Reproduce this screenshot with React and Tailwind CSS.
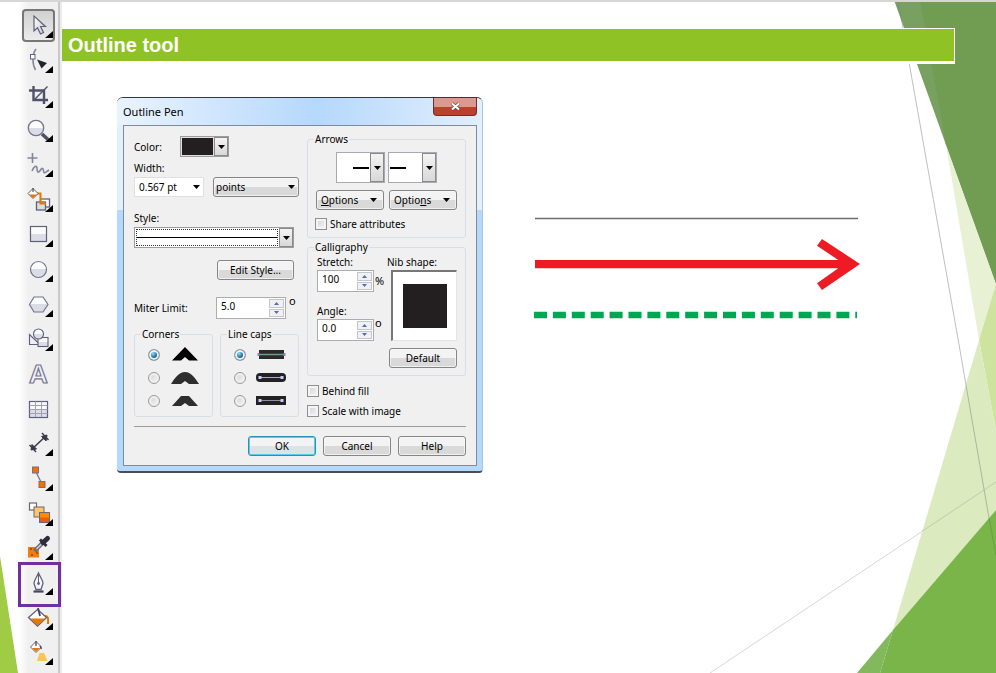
import React from "react";

const INK = "#5f6079";

function Flyout() {
  return <polygon points="31,22 31,29 23,29" fill="#000" />;
}

const tools = [
  {
    name: "Pick",
    art: (
      <path d="M12 7V22L15.500 18.800L18.500 25L21.500 23.500L18.600 17.500H23.500Z" fill="url(#metal)" stroke={INK} strokeWidth="1.200" />
    ),
  },
  {
    name: "Shape",
    art: (
      <g>
        <path d="M14 5C10 10 10 20 13.500 26" fill="none" stroke="#8586a0" strokeWidth="1.600" />
        <rect x="8.500" y="10.500" width="4.500" height="4.500" fill="#fff" stroke={INK} />
        <polygon points="15,15.500 25,19 19.500,24.500" fill="#24242f" />
      </g>
    ),
  },
  {
    name: "Crop",
    art: (
      <g fill="none" stroke="#50516a">
        <path d="M7 11.500H22V25M11.500 7V21H26" strokeWidth="2.400" />
        <path d="M13 20L25.500 7.500" strokeWidth="1.500" />
      </g>
    ),
  },
  {
    name: "Zoom",
    art: (
      <g>
        <path d="M20 21L26 26.500" stroke="#4e4f62" strokeWidth="3.500" />
        <circle cx="14" cy="15" r="7.700" fill="url(#half)" stroke="#74758c" strokeWidth="1.300" />
      </g>
    ),
  },
  {
    name: "Freehand",
    art: (
      <g fill="none" stroke="#84859c">
        <path d="M10.500 5V15M5.500 10H15.500" strokeWidth="1.600" />
        <path d="M10 23C12 18 14.500 17 15 20C15 24 16 26 18.500 22C20 19.500 21.500 20 21.500 23C22 26.500 24 24 27 22" strokeWidth="1.600" />
      </g>
    ),
  },
  {
    name: "Smart fill",
    art: (
      <g>
        <rect x="18.500" y="16" width="9" height="8" fill="#fff" stroke={INK} strokeWidth="1.300" />
        <rect x="14.500" y="19" width="9" height="8" fill="#ddd" stroke={INK} strokeWidth="1.300" />
        <path d="M14 10.500H18.500V20.500H24" fill="none" stroke="#e67800" strokeWidth="2" />
        <polygon points="11,5.500 16,10.500 11,15.500 6,10.500" fill="#fff" stroke={INK} />
        <polygon points="7,11.500 15,11.500 11,15" fill="#e67800" />
        <path d="M11 9V5" stroke="#33333f" />
      </g>
    ),
  },
  { name: "Rectangle", art: <rect x="8.500" y="8.500" width="16" height="15" fill="url(#half)" stroke={INK} strokeWidth="1.200" /> },
  { name: "Ellipse", art: <circle cx="16.500" cy="16.500" r="8" fill="url(#half)" stroke="#74758c" strokeWidth="1.200" /> },
  { name: "Polygon", art: <polygon points="12,9 21,9 26,16.500 21,24 12,24 7.500,16.500" fill="url(#half)" stroke="#74758c" strokeWidth="1.200" /> },
  {
    name: "Basic shapes",
    art: (
      <g stroke={INK} strokeWidth="1.100">
        <polygon points="7.500,12.500 7.500,22.500 18,22.500" fill="#eeeef3" />
        <rect x="16" y="15.500" width="10" height="9" fill="url(#half)" />
        <circle cx="16.500" cy="12" r="5" fill="url(#half)" />
      </g>
    ),
  },
  {
    name: "Text",
    plain: true,
    art: (
      <text x="16.500" y="25.500" textAnchor="middle" fontSize="26" fontFamily="Liberation Sans, sans-serif" fontWeight="700" fill="#f2f2f7" stroke="#74758c" strokeWidth="1.200">
        A
      </text>
    ),
  },
  {
    name: "Table",
    plain: true,
    art: (
      <g>
        <rect x="7.500" y="9.500" width="18" height="16" fill="url(#half)" stroke={INK} strokeWidth="1.200" />
        <path d="M13.500 9.500V25M19.500 9.500V25M7.500 13.500H25.500M7.500 17.500H25.500M7.500 21.500H25.500" stroke="#a0a1b4" />
      </g>
    ),
  },
  {
    name: "Dimension",
    art: (
      <g stroke="#3a3a4b" fill="#3a3a4b">
        <path d="M10 22L24 9" strokeWidth="1.600" />
        <path d="M7.500 18L14 25M20 6L26.500 13" strokeWidth="1.400" />
        <polygon points="9,23 10,17.500 14.500,22" />
        <polygon points="25,8 19.500,9.500 24,14" />
      </g>
    ),
  },
  {
    name: "Connector",
    art: (
      <g stroke="#70708a">
        <path d="M13 8L20 22" strokeWidth="1.300" />
        <rect x="10.500" y="5" width="6" height="6" fill="#f07000" />
        <rect x="17" y="19.500" width="6" height="6" fill="#f07000" />
      </g>
    ),
  },
  {
    name: "Blend",
    art: (
      <g stroke="#6f6672">
        <rect x="7.500" y="6" width="7" height="7" fill="#fff" strokeWidth="1.200" />
        <rect x="12" y="10" width="10" height="10" fill="#fdc469" />
        <rect x="17.500" y="15.500" width="10" height="10" fill="url(#flame)" />
      </g>
    ),
  },
  {
    name: "Color eyedropper",
    art: (
      <g>
        <rect x="6" y="16" width="11" height="10.500" fill="#ef7d0a" />
        <path d="M8 18H10M14 22H16M9 24H11" stroke="#9d3f00" strokeWidth="1.500" />
        <path d="M12.500 20L21 11.500" stroke="#696a7e" strokeWidth="4" />
        <path d="M14.500 18L20 12.500" stroke="#d2d2dd" strokeWidth="1.500" />
        <path d="M18 8.500L24.500 15" stroke="#2d2d3c" strokeWidth="3" />
        <path d="M21 11.500L25.500 7.500" stroke="#2d2d3c" strokeWidth="5" strokeLinecap="round" />
      </g>
    ),
  },
  {
    name: "Outline pen",
    marked: true,
    art: (
      <g>
        <path d="M16.500 7C15 11 12 14 12 17.500L14 23.500H19L21 17.500C21 14 18 11 16.500 7Z" fill="#f4f4f8" stroke={INK} strokeWidth="1.300" />
        <path d="M16.500 8V17" stroke={INK} />
        <circle cx="16.500" cy="17.500" r="1.400" fill={INK} />
        <path d="M11.500 25.500H21.500" stroke="#45465c" strokeWidth="2.200" />
      </g>
    ),
  },
  {
    name: "Fill",
    art: (
      <g>
        <path d="M23 15C27 15 26 19 26 23" fill="none" stroke="#e67800" strokeWidth="2" />
        <polygon points="15.500,8.500 24.500,16.500 15.500,25 6.500,16.500" fill="#fff" stroke={INK} strokeWidth="1.300" />
        <polygon points="8,17.500 23.500,17.500 15.500,24.500" fill="#e67800" />
        <path d="M16 7L18 15" stroke="#45465c" strokeWidth="1.800" />
      </g>
    ),
  },
  {
    name: "Interactive fill",
    art: (
      <g>
        <polygon points="17.500,17 22,17 25.500,25 15,25" fill="#f9c455" />
        <polygon points="14,5.500 19.500,11 14,16.500 8.500,11" fill="#fff" stroke={INK} />
        <polygon points="10,12 18,12 14,15.500" fill="#e67800" />
        <path d="M14 5V10M18 10L19.500 13" stroke="#45465c" strokeWidth="1.300" />
      </g>
    ),
  },
];

function Toolbox() {
  return (
    <nav aria-label="Toolbox" className="flex w-[62px] shrink-0 bg-linear-to-r from-white from-[30%] to-[#f0f0f0] to-[46%]">
      <svg className="absolute size-0" aria-hidden="true">
        <defs>
          <linearGradient id="half" x2="0" y2="1">
            <stop offset="0.500" stopColor="#fbfbfd" />
            <stop offset="0.500" stopColor="#dcdce6" />
          </linearGradient>
          <linearGradient id="metal" x2="1" y2="1">
            <stop offset="0" stopColor="#fff" />
            <stop offset="1" stopColor="#c5c5d2" />
          </linearGradient>
          <linearGradient id="flame" x2="0" y2="1">
            <stop offset="0.400" stopColor="#ff8c00" />
            <stop offset="0.600" stopColor="#f2570a" />
          </linearGradient>
        </defs>
      </svg>
      <div className="flex flex-1 flex-col justify-between pt-[7px] pb-1 pl-[22px]">
        {tools.map((tool, index) => (
          <button
            key={tool.name}
            type="button"
            aria-label={tool.name}
            className={
              index === 0
                ? "relative size-[33px] rounded-sm bg-linear-to-b from-[#cfcfcf] to-[#ededed] inset-ring-2 inset-ring-[#777]"
                : "relative size-[33px]"
            }
          >
            <svg viewBox="0 0 33 33" className="size-[33px]" aria-hidden="true">
              {tool.art}
              {!tool.plain && <Flyout />}
            </svg>
            {tool.marked && <span className="absolute -top-1 -bottom-2 -left-1 w-[43px] border-[3px] border-[#7030a0]" />}
          </button>
        ))}
      </div>
      <div className="w-1 border-l-2 border-[#c9c9c9] bg-[#ececec]" />
    </nav>
  );
}

function Backdrop() {
  return (
    <div aria-hidden="true" className="pointer-events-none absolute inset-0 -z-10">
      <svg viewBox="0 0 296 673" preserveAspectRatio="none" className="absolute top-0 right-0 h-full w-[296px]">
        <polygon points="194,0 296,0 296,284" fill="#78a061" />
        <polygon points="220,0 296,0 296,284 246,145" fill="#719d52" />
        <polygon points="246,145 296,284 279,340" fill="#e8f1d3" />
        <polygon points="296,284 279,340 296,431" fill="#cee39e" />
        <polygon points="279,340 296,431 296,510 193,630" fill="#dcebbf" />
        <polygon points="296,510 193,630 180,673 296,673" fill="#7ab54a" />
        <polygon points="193,630 157,673 180,673" fill="#82b95c" />
        <path d="M198 0L257 333L289 518" stroke="#808080" strokeOpacity="0.500" fill="none" />
        <path d="M289 518L296 555" stroke="#5f9a35" strokeOpacity="0.700" />
        <path d="M10 673L296 482" stroke="#999" strokeOpacity="0.400" />
      </svg>
    </div>
  );
}

function Arrow({ className = "" }) {
  return (
    <svg viewBox="0 0 7 4" className={"h-1 w-[7px] shrink-0 " + className} aria-hidden="true">
      <polygon points="0,0 7,0 3.500,4" fill="#000" />
    </svg>
  );
}

function DropEnd() {
  return (
    <span className="flex w-[14px] shrink-0 items-center justify-center border border-[#8a8a8a] bg-linear-to-b from-[#f4f4f4] to-[#d8d8d8]">
      <Arrow />
    </span>
  );
}

const raised = "rounded-[3px] border border-[#858585] bg-linear-to-b from-[#f3f3f3] from-50% to-[#d9d9d9] to-50% inset-ring inset-ring-[#fafafa]/70";

function PushButton({ primary, children }) {
  return (
    <button
      type="button"
      className={
        primary
          ? "h-5 w-[68px] rounded-[3px] border border-[#2c8fb8] bg-linear-to-b from-[#f3f3f3] from-50% to-[#dbe3e6] to-50% inset-ring inset-ring-[#58cdf0]"
          : "h-5 w-[68px] " + raised
      }
    >
      {children}
    </button>
  );
}

function Spinner({ id, value, wide }) {
  return (
    <span className={"flex h-[22px] border border-[#abadb3] bg-white " + (wide ? "w-[70px]" : "w-[57px]")}>
      <input id={id} defaultValue={value} className="h-4 min-w-0 flex-1 bg-transparent pl-1 outline-none" />
      <span className="flex w-[17px] flex-col gap-px p-px">
        <button type="button" aria-label="Increase" className="flex flex-1 items-center justify-center border border-[#c4c6ce] bg-[#f1f1f4]">
          <svg viewBox="0 0 5 3" className="h-[3px] w-[5px]"><polygon points="0,3 5,3 2.500,0" fill="#536bb0" /></svg>
        </button>
        <button type="button" aria-label="Decrease" className="flex flex-1 items-center justify-center border border-[#c4c6ce] bg-[#f1f1f4]">
          <svg viewBox="0 0 5 3" className="h-[3px] w-[5px]"><polygon points="0,0 5,0 2.500,3" fill="#536bb0" /></svg>
        </button>
      </span>
    </span>
  );
}

const groupBox = "min-w-0 rounded-[3px] border border-[#d5dfe5]";

function Check({ children }) {
  return (
    <label className="flex h-3.5 items-center gap-[3px]">
      <input type="checkbox" className="size-3 shrink-0 appearance-none border border-[#8e8f8f] bg-linear-to-br from-[#cfd3d8] to-[#f6f6f6] inset-ring-2 inset-ring-[#f4f4f4]" />
      {children}
    </label>
  );
}

function RadioGroup({ legend, name, options }) {
  return (
    <fieldset className={"flex-1 pb-2 " + groupBox}>
      <legend className="ml-1.5 h-3.5 px-px">{legend}</legend>
      <div className="flex flex-col gap-2 pt-1.5 pl-[13px]">
        {options.map((option, index) => (
          <label key={option.label} className="flex h-[15px] items-center gap-2.5">
            <input
              type="radio"
              name={name}
              defaultChecked={index === 0}
              aria-label={option.label}
              className="size-3 shrink-0 appearance-none rounded-full border border-[#9a9b9b] bg-linear-to-br from-[#d0d0d0] to-[#f8f8f8] inset-ring-2 inset-ring-[#f0f0f0] checked:bg-radial-[at_40%_35%] checked:from-[#8be0ff] checked:via-[#1c6a99] checked:via-45% checked:to-[#0d3a5a]"
            />
            <svg viewBox="0 0 30 15" className="h-[15px] w-[30px]" aria-hidden="true">{option.art}</svg>
          </label>
        ))}
      </div>
    </fieldset>
  );
}

const corners = [
  { label: "Mitered", art: <path d="M15 0L28 13.500H19L15 10L11 13.500H2Z" fill="#000" /> },
  { label: "Round", art: <path d="M1 14C5 8 9 2 15 2C21 2 25 8 29 14H19L15 11L11 14Z" fill="#2e2e2e" /> },
  { label: "Beveled", art: <path d="M11 3H19L28 13H19L15 10L11 13H2Z" fill="#2e2e2e" /> },
];

const caps = [
  {
    label: "Butt",
    art: (
      <g>
        <rect x="3" y="3" width="25" height="9" fill="#2a2a2a" />
        <path d="M3 7.500H28" stroke="#6e9c8a" strokeWidth="1.500" />
        <path d="M2.500 6V9M28.500 6V9" stroke="#8283c4" strokeWidth="2" />
      </g>
    ),
  },
  {
    label: "Rounded",
    art: (
      <g>
        <rect x="0" y="3" width="30" height="9" rx="4" fill="#222" />
        <path d="M4 7.500H26" stroke="#b9a3c9" />
        <path d="M4 6V9M26 6V9" stroke="#c9caff" strokeWidth="3" />
      </g>
    ),
  },
  {
    label: "Extended",
    art: (
      <g>
        <rect x="0" y="3" width="30" height="9" fill="#222" />
        <path d="M4 7.500H26" stroke="#8f8fa0" />
        <path d="M4 6V9M26 6V9" stroke="#c9caff" strokeWidth="3" />
      </g>
    ),
  },
];

function LeftColumn() {
  return (
    <div className="flex w-[165px] flex-col pt-2.5">
      <div className="flex h-[21px] items-center">
        <span id="color-label" className="w-[46px]">Color:</span>
        <button type="button" aria-labelledby="color-label" className="flex h-[21px] w-[49px] border border-[#9c9c9c] bg-white">
          <span className="flex-1 self-stretch border border-[#e0e0e0] bg-[#231f20]" />
          <span className="flex self-stretch"><DropEnd /></span>
        </button>
      </div>
      <label htmlFor="pen-width" className="mt-1 h-3.5">Width:</label>
      <div className="mt-0.5 flex gap-[9px]">
        <span className="relative flex w-[70px] items-center">
          <select id="pen-width" className="h-5 w-full appearance-none border border-[#dfdfe4] bg-white pl-1">
            <option>0.567 pt</option>
          </select>
          <Arrow className="pointer-events-none absolute right-1" />
        </span>
        <span className="relative flex flex-1 items-center">
          <select aria-label="Units" className={"h-5 w-full appearance-none pl-0.5 " + raised}>
            <option>points</option>
          </select>
          <Arrow className="pointer-events-none absolute right-1" />
        </span>
      </div>
      <span id="style-label" className="mt-3.5 h-3.5">Style:</span>
      <button type="button" aria-labelledby="style-label" className="mt-0.5 flex h-[21px] w-40 border border-[#9c9c9c] bg-white">
        <span className="m-px flex flex-1 items-center self-stretch border border-dotted border-[#333]">
          <span className="h-px w-full bg-black" />
        </span>
        <span className="flex self-stretch"><DropEnd /></span>
      </button>
      <button type="button" className={"mt-3 ml-[83px] h-5 w-[77px] " + raised}>Edit Style...</button>
      <div className="mt-[17px] flex h-[22px] items-center">
        <label htmlFor="miter" className="w-[82px]">Miter Limit:</label>
        <Spinner id="miter" value="5.0" wide />
        <span className="ml-[3px] self-start text-[11px] leading-2">o</span>
      </div>
      <div className="mt-2 flex gap-[7px]">
        <RadioGroup legend="Corners" name="corners" options={corners} />
        <RadioGroup legend="Line caps" name="caps" options={caps} />
      </div>
    </div>
  );
}

function ArrowPicker({ label, flip }) {
  return (
    <button type="button" aria-label={label} className="flex h-[31px] w-[49px] border border-[#a9a9b2] bg-white">
      <span className={"flex flex-1 items-center self-stretch px-px " + (flip ? "justify-start" : "justify-end")}>
        <span className="h-0.5 w-4 bg-black" />
      </span>
      <span className="flex self-stretch"><DropEnd /></span>
    </button>
  );
}

function RightColumn() {
  return (
    <div className="flex w-[159px] flex-col pt-1.5">
      <fieldset className={"h-[106px] " + groupBox}>
        <legend className="ml-1.5 h-3.5 px-px">Arrows</legend>
        <div className="flex gap-[3px] pt-1.5 pl-7">
          <ArrowPicker label="Start arrow" />
          <ArrowPicker label="End arrow" flip />
        </div>
        <div className="mt-[7px] flex justify-between px-2">
          <button type="button" className={"flex h-5 w-[68px] items-center justify-between px-1 " + raised}>
            <span><u>O</u>ptions</span>
            <Arrow className="mr-0.5" />
          </button>
          <button type="button" className={"flex h-5 w-[68px] items-center justify-between px-1 " + raised}>
            <span>Optio<u>n</u>s</span>
            <Arrow className="mr-0.5" />
          </button>
        </div>
        <div className="mt-[7px] pl-[7px]"><Check>Share attributes</Check></div>
      </fieldset>
      <fieldset className={"mt-0.5 h-[136px] " + groupBox}>
        <legend className="ml-1.5 h-3.5 px-px">Calligraphy</legend>
        <div className="flex justify-between pt-px pr-2 pl-[9px]">
          <div className="flex flex-col">
            <label htmlFor="stretch" className="h-[15px]">Stretch:</label>
            <span className="flex items-center gap-px">
              <Spinner id="stretch" value="100" />
              <span className="text-[11px]">%</span>
            </span>
            <label htmlFor="angle" className="mt-3 h-[15px]">Angle:</label>
            <span className="flex gap-px">
              <Spinner id="angle" value="0.0" />
              <span className="text-[11px] leading-2">o</span>
            </span>
          </div>
          <div className="flex w-[66px] flex-col">
            <span className="-ml-1 h-[15px] whitespace-nowrap">Nib shape:</span>
            <div className="flex h-[71px] items-center justify-center border border-t-2 border-l-2 border-[#e4e4e4] border-t-[#777] border-l-[#777] bg-white">
              <span className="size-11 bg-[#231f20]" />
            </div>
          </div>
        </div>
        <div className="mt-[7px] flex justify-end pr-2"><PushButton>Default</PushButton></div>
      </fieldset>
      <div className="mt-2 flex flex-col gap-1.5">
        <Check>Behind fill</Check>
        <Check>Scale with image</Check>
      </div>
    </div>
  );
}

function OutlinePenDialog() {
  return (
    <section
      aria-label="Outline Pen"
      className="w-[366px] shrink-0 rounded-t-md rounded-b-sm border-t border-r border-b-2 border-t-[#33383e] border-r-[#a9c4de] border-b-[#4b4d55] bg-linear-to-b from-[#e2effc] from-[30%] to-[#b5d9fc] to-[30%] px-[5px] pb-[5px] pl-1.5 font-['Noto_Sans','DejaVu_Sans',sans-serif] text-[10px] leading-3.5 text-black"
    >
      <header className="-mr-[5px] -ml-1.5 flex h-[27px] items-center justify-between rounded-t-md bg-linear-to-r from-[#e9f3fd] via-[#b5d8fd] via-55% to-[#e2effc] pr-[5px] pl-1.5">
        <h2 className="text-[11px]">Outline Pen</h2>
        <button type="button" aria-label="Close" className="flex h-[18px] w-11 items-center justify-center self-start rounded-b-[4px] border border-t-0 border-[#6c2f2a] bg-linear-to-b from-[#dc9a8e] from-50% to-[#bd402c] to-50%">
          <svg viewBox="0 0 11 9" className="h-[9px] w-[11px]" aria-hidden="true">
            <path d="M2 1.500L9 7.500M9 1.500L2 7.500" stroke="#6b4b4b" strokeWidth="3.600" />
            <path d="M2 1.500L9 7.500M9 1.500L2 7.500" stroke="#fff" strokeWidth="2" />
          </svg>
        </button>
      </header>
      <div className="border border-[#7f8b98] bg-[#f0f0f0] px-2.5 pb-[9px]">
        <div className="flex justify-between">
          <LeftColumn />
          <RightColumn />
        </div>
        <hr className="mt-2 border-[#9c9c9c]" />
        <div className="mt-[9px] flex justify-end gap-[7px]">
          <PushButton primary>OK</PushButton>
          <PushButton>Cancel</PushButton>
          <PushButton>Help</PushButton>
        </div>
      </div>
    </section>
  );
}

function OutlineSamples() {
  return (
    <svg viewBox="534 214 330 108" role="img" aria-label="Outline samples" className="mt-[117px] h-[108px] w-[330px] shrink-0">
      <path d="M535 218.500H858" stroke="#6e6e6e" strokeWidth="1.300" />
      <polygon points="535,260 838.300,260 817,245.700 822,239 860,264 822,290 817,283.300 838.300,268.300 535,268.300" fill="#ed1c24" />
      <path d="M534 315H857" stroke="#00a651" strokeWidth="6.500" strokeDasharray="13 5.900" />
    </svg>
  );
}

export default function App() {
  return (
    <div className="relative isolate flex min-h-screen flex-col overflow-hidden bg-white">
      <Backdrop />
      <div className="h-0.5 bg-[#d6d6d6]" />
      <div className="flex flex-1">
        <div className="-mr-[62px] flex w-[62px] items-end" aria-hidden="true">
          <svg viewBox="0 0 18 117" className="z-10 h-[117px] w-[18px]">
            <polygon points="0,0 0,117 18,117" fill="#9fcb45" />
          </svg>
        </div>
        <Toolbox />
        <main className="min-w-0 flex-1 pt-[26px]">
          <h1 className="mr-[41px] border-t border-r border-b-[3px] border-white bg-[#8fc325] px-1.5 font-['Liberation_Sans',Arial,sans-serif] text-xl leading-8 font-bold text-white">
            Outline tool
          </h1>
          <div className="flex items-start gap-[51px] pt-[33px] pl-[55px]">
            <OutlinePenDialog />
            <OutlineSamples />
          </div>
        </main>
      </div>
    </div>
  );
}
